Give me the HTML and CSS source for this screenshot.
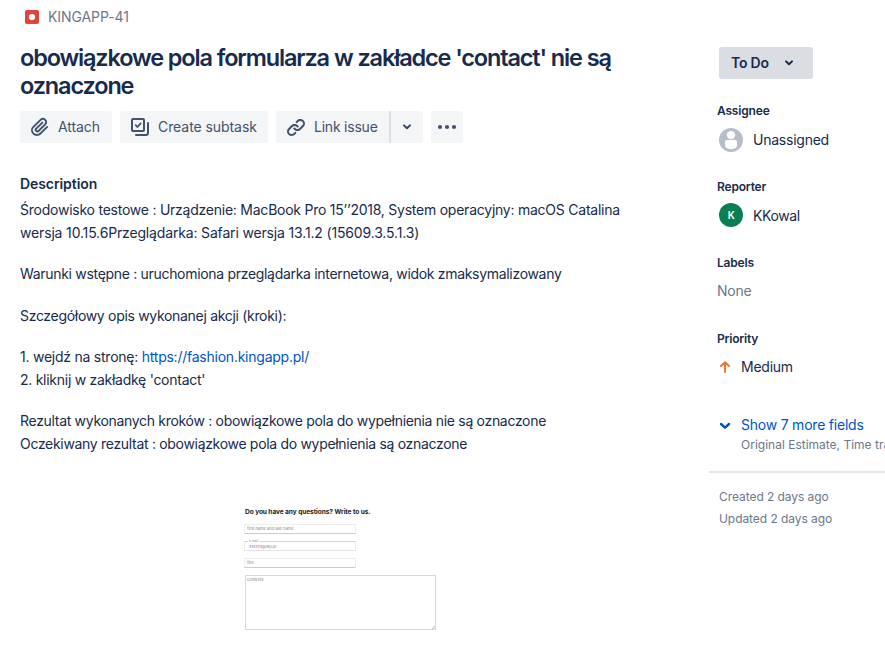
FILE: index.html
```html
<!DOCTYPE html>
<html lang="pl">
<head>
<meta charset="utf-8">
<title>KINGAPP-41</title>
<link rel="stylesheet" href="styles.css">
</head>
<body>
<div class="page">
  <main class="issue">
    <div class="breadcrumb">
      <svg width="14" height="14" viewBox="0 0 14 14"><rect width="14" height="14" rx="2" fill="#e2433a"/><circle cx="7" cy="7" r="3.1" fill="#fff"/></svg>
      <span>KINGAPP-41</span>
    </div>
    <h1 class="title"><span>obowiązkowe pola formularza w zakładce 'contact' nie są</span><br><span>oznaczone</span></h1>
    <div class="actions">
      <button class="btn attach">
        <svg width="24" height="24" viewBox="0 0 24 24" fill="#42526e"><path d="M11.643 17.965c-1.53 1.495-4.016 1.496-5.542.004a3.773 3.773 0 0 1 .002-5.412l7.147-6.985a2.316 2.316 0 0 1 3.233-.003c.893.873.895 2.282.004 3.153l-6.703 6.55a.653.653 0 0 1-.914-.008.62.62 0 0 1 0-.902l6.229-6.087a.941.941 0 0 0 0-1.353.995.995 0 0 0-1.384 0l-6.229 6.087a2.502 2.502 0 0 0 0 3.607 2.643 2.643 0 0 0 3.683.009l6.703-6.551a4.074 4.074 0 0 0-.003-5.859 4.306 4.306 0 0 0-6.002.003l-7.148 6.985a5.655 5.655 0 0 0-.001 8.118c2.29 2.237 6.015 2.238 8.308-.004l6.862-6.705a.941.941 0 0 0 0-1.353.995.995 0 0 0-1.384 0l-6.861 6.706z"/></svg>
        <span>Attach</span>
      </button>
      <button class="btn subtask">
        <svg width="24" height="24" viewBox="0 0 24 24" fill="none" stroke="#42526e" stroke-width="2" stroke-linecap="round" stroke-linejoin="round"><rect x="4" y="4" width="12" height="12" rx="1"/><path d="M20 8v10a2 2 0 0 1-2 2H8"/><path d="M7.7 10.2l1.7 1.8 3.3-3.6" stroke-width="1.8"/></svg>
        <span>Create subtask</span>
      </button>
      <div class="split">
        <button class="btn link">
          <svg width="24" height="24" viewBox="0 0 24 24" fill="#42526e"><path d="M12.856 5.457l-.937.92a1.002 1.002 0 0 0 0 1.437 1.047 1.047 0 0 0 1.463 0l.984-.966c.967-.95 2.542-1.135 3.602-.288a2.54 2.54 0 0 1 .203 3.81l-2.903 2.852a2.646 2.646 0 0 1-3.696 0l-1.11-1.09L9 13.57l1.108 1.089c1.822 1.788 4.802 1.788 6.622 0l2.905-2.852a4.558 4.558 0 0 0-.357-6.82c-1.893-1.517-4.695-1.226-6.422.47"/><path d="M11.144 19.543l.937-.92a1.002 1.002 0 0 0 0-1.437 1.047 1.047 0 0 0-1.462 0l-.985.966c-.967.95-2.542 1.135-3.602.288a2.54 2.54 0 0 1-.203-3.81l2.903-2.852a2.646 2.646 0 0 1 3.696 0l1.11 1.09L15 11.43l-1.108-1.089c-1.822-1.788-4.802-1.788-6.622 0l-2.905 2.852a4.558 4.558 0 0 0 .357 6.82c1.893 1.517 4.695 1.226 6.422-.47"/></svg>
          <span>Link issue</span>
        </button>
        <button class="btn drop"><svg width="10" height="8" viewBox="0 0 10 8" fill="none" stroke="#344563" stroke-width="2" stroke-linecap="round" stroke-linejoin="round"><path d="M2 2.4L5 5.3 8 2.4"/></svg></button>
      </div>
      <button class="btn more"><svg width="20" height="6" viewBox="0 0 20 6" fill="#42526e"><circle cx="3" cy="3" r="2.1"/><circle cx="10" cy="3" r="2.1"/><circle cx="17" cy="3" r="2.1"/></svg></button>
    </div>
    <h2 class="heading">Description</h2>
    <div class="description">
      <p><span class="env">Środowisko testowe : Urządzenie: MacBook Pro 15’’2018, System operacyjny: macOS Catalina</span><br><span class="version">wersja 10.15.6Przeglądarka: Safari wersja 13.1.2 (15609.3.5.1.3)</span></p>
      <p>Warunki wstępne : uruchomiona przeglądarka internetowa, widok zmaksymalizowany</p>
      <p>Szczegółowy opis wykonanej akcji (kroki):</p>
      <p><span class="env">1. wejdź na stronę: <a href="#">https://fashion.kingapp.pl/</a></span><br><span class="step">2. kliknij w zakładkę 'contact'</span></p>
      <p>Rezultat wykonanych kroków : obowiązkowe pola do wypełnienia nie są oznaczone<br>Oczekiwany rezultat : obowiązkowe pola do wypełnienia są oznaczone</p>
    </div>
    <div class="form">
      <div class="form-title">Do you have any questions? Write to us.</div>
      <div class="field">first name and last name</div>
      <div class="field email"><span class="legend">e-mail</span>xxxxxx@wp.pl</div>
      <div class="field">title</div>
      <div class="area">contents<svg width="3" height="3" viewBox="0 0 3 3" stroke="#999" stroke-width=".6"><path d="M0 3L3 0M1.5 3L3 1.5"/></svg></div>
    </div>
  </main>
  <aside class="side">
    <button class="status"><span>To Do</span><svg width="10" height="8" viewBox="0 0 10 8" fill="none" stroke="#172b4d" stroke-width="2" stroke-linecap="round" stroke-linejoin="round"><path d="M2 2.4L5 5.3 8 2.4"/></svg></button>
    <section class="group">
      <h3>Assignee</h3>
      <div class="value person"><svg width="24" height="24" viewBox="0 0 24 24"><circle cx="12" cy="12" r="12" fill="#b7bdca"/><circle cx="12" cy="7.1" r="4.2" fill="#fff"/><path d="M6 14a2 2 0 0 1 2-2h8a2 2 0 0 1 2 2v3.500c0 2-2.700 3.600-6 3.600s-6-1.600-6-3.600z" fill="#fff"/></svg><span>Unassigned</span></div>
    </section>
    <section class="group">
      <h3>Reporter</h3>
      <div class="value person reporter"><span class="avatar">K</span><span>KKowal</span></div>
    </section>
    <section class="group">
      <h3>Labels</h3>
      <div class="value none">None</div>
    </section>
    <section class="group">
      <h3>Priority</h3>
      <div class="value priority"><svg width="12" height="12" viewBox="0 0 12 12" fill="none" stroke="#ed7530" stroke-width="2" stroke-linecap="round" stroke-linejoin="round"><path d="M6 11V1.500M2 5L6 1.200 10 5"/></svg><span>Medium</span></div>
    </section>
    <div class="show">
      <svg width="12" height="8" viewBox="0 0 12 8" fill="none" stroke="#0052cc" stroke-width="2.400" stroke-linecap="round" stroke-linejoin="round"><path d="M2 2L6 5.700 10 2"/></svg>
      <div><a href="#">Show 7 more fields</a><div class="hint">Original Estimate, Time tracking</div></div>
    </div>
    <div class="dates"><div>Created 2 days ago</div><div>Updated 2 days ago</div></div>
  </aside>
</div>
</body>
</html>
```
FILE: styles.css
```css
* { box-sizing: border-box; }
body {
  margin: 0;
  background: #fff;
  color: #172b4d;
  font: 14px/20px Inter, sans-serif;
  overflow: hidden;
}
button { border: 0; font: inherit; color: inherit; margin: 0; padding: 0; }
svg { display: block; flex: none; }
h1, h2, h3, p { margin: 0; }
a { color: #0052cc; text-decoration: none; }

.page { display: flex; width: 885px; height: 659px; overflow: hidden; white-space: nowrap; }
.issue { width: 709px; flex: none; padding: 7px 0 0 20px; }
.breadcrumb { display: flex; align-items: center; gap: 9px; height: 20px; padding-left: 5px; color: #6b778c; letter-spacing: -0.08px; }
.title { margin-top: 17px; font-size: 23.5px; line-height: 28px; font-weight: 600; letter-spacing: -1.16px; word-spacing: 0.2px; }
.actions { display: flex; gap: 8px; margin-top: 11px; height: 32px; color: #42526e; letter-spacing: -0.07px; }
.btn { display: flex; align-items: center; height: 32px; background: #f4f5f7; border-radius: 3px; letter-spacing: inherit; }
.btn.attach, .btn.subtask, .btn.link { padding-left: 8px; gap: 6px; }
.attach { width: 92px; }
.subtask { width: 148px; }
.split { display: flex; }
.btn.link { width: 113px; border-radius: 3px 0 0 3px; letter-spacing: -0.22px; }
.btn.drop { width: 34px; justify-content: center; border-left: 2px solid #dcdfe5; border-radius: 0 3px 3px 0; }
.btn.more { width: 32px; justify-content: center; }
.heading { margin-top: 31px; font-size: 14px; line-height: 20px; font-weight: 600; letter-spacing: -0.08px; }
.description { margin-top: 4px; line-height: 23px; letter-spacing: -0.31px; }
.description p + p { margin-top: 18.25px; }
.env { letter-spacing: -0.24px; }
.version { letter-spacing: -0.16px; }
.step { letter-spacing: -0.27px; }

.form { width: 192px; margin: 52px 0 0 224px; font-size: 4px; line-height: 6px; color: #888; }
.form-title { height: 10px; padding-left: 1px; line-height: 10px; font-size: 6.600px; font-weight: 700; letter-spacing: -0.08px; color: #222; }
.field { position: relative; width: 112px; height: 10px; margin-top: 7px; padding: 1px 2px; border: 1px solid #eee; border-bottom-color: #ccc; }
.field.email { padding: 2px 4px; border-top-color: #d5d5d5; border-bottom-color: #e4e4e4; }
.legend { position: absolute; left: 3px; top: -4px; padding: 0 1px; background: #fff; font-size: 3px; }
.area { position: relative; height: 55px; margin: 7px 0 0 1px; padding: 1px; border: 1px solid #d8d8d8; }
.area svg { position: absolute; right: 0; bottom: 0; }

.side { width: 176px; flex: none; padding-top: 47px; }
.status { display: flex; align-items: center; justify-content: space-between; width: 94px; height: 32px; margin-left: 10px; padding: 0 19px 0 12px; background: #dadde2; border-radius: 3px; font-weight: 600; letter-spacing: -0.2px; }
.group { height: 76px; padding-left: 8px; }
.status + .group { margin-top: 24px; }
.group h3 { font-size: 12px; line-height: 16px; font-weight: 600; letter-spacing: -0.18px; }
.value { display: flex; align-items: center; letter-spacing: -0.24px; }
.person { gap: 10px; height: 24px; margin: 9px 0 0 2px; }
.reporter { align-items: flex-end; margin-top: 8px; height: 25px; letter-spacing: -0.4px; }
.reporter span:last-child { padding-bottom: 2px; }
.avatar { align-self: flex-start; width: 24px; height: 24px; border-radius: 50%; background: #0b7f52; color: #fff; font-size: 10px; line-height: 24px; font-weight: 600; text-align: center; }
.none { margin-top: 10px; color: #6b778c; }
.priority { gap: 10px; margin: 10px 0 0 2px; }
.show { display: flex; gap: 10px; height: 56px; margin-top: 8px; padding-left: 10px; letter-spacing: -0.22px; }
.show svg { margin-top: 7px; }
.hint { margin-top: 1px; font-size: 12px; line-height: 18px; letter-spacing: 0; color: #6b778c; }
.dates { border-top: 2px solid #e4e6ea; padding: 13px 0 0 10px; font-size: 12px; line-height: 22px; letter-spacing: -0.06px; color: #6b778c; }
```
